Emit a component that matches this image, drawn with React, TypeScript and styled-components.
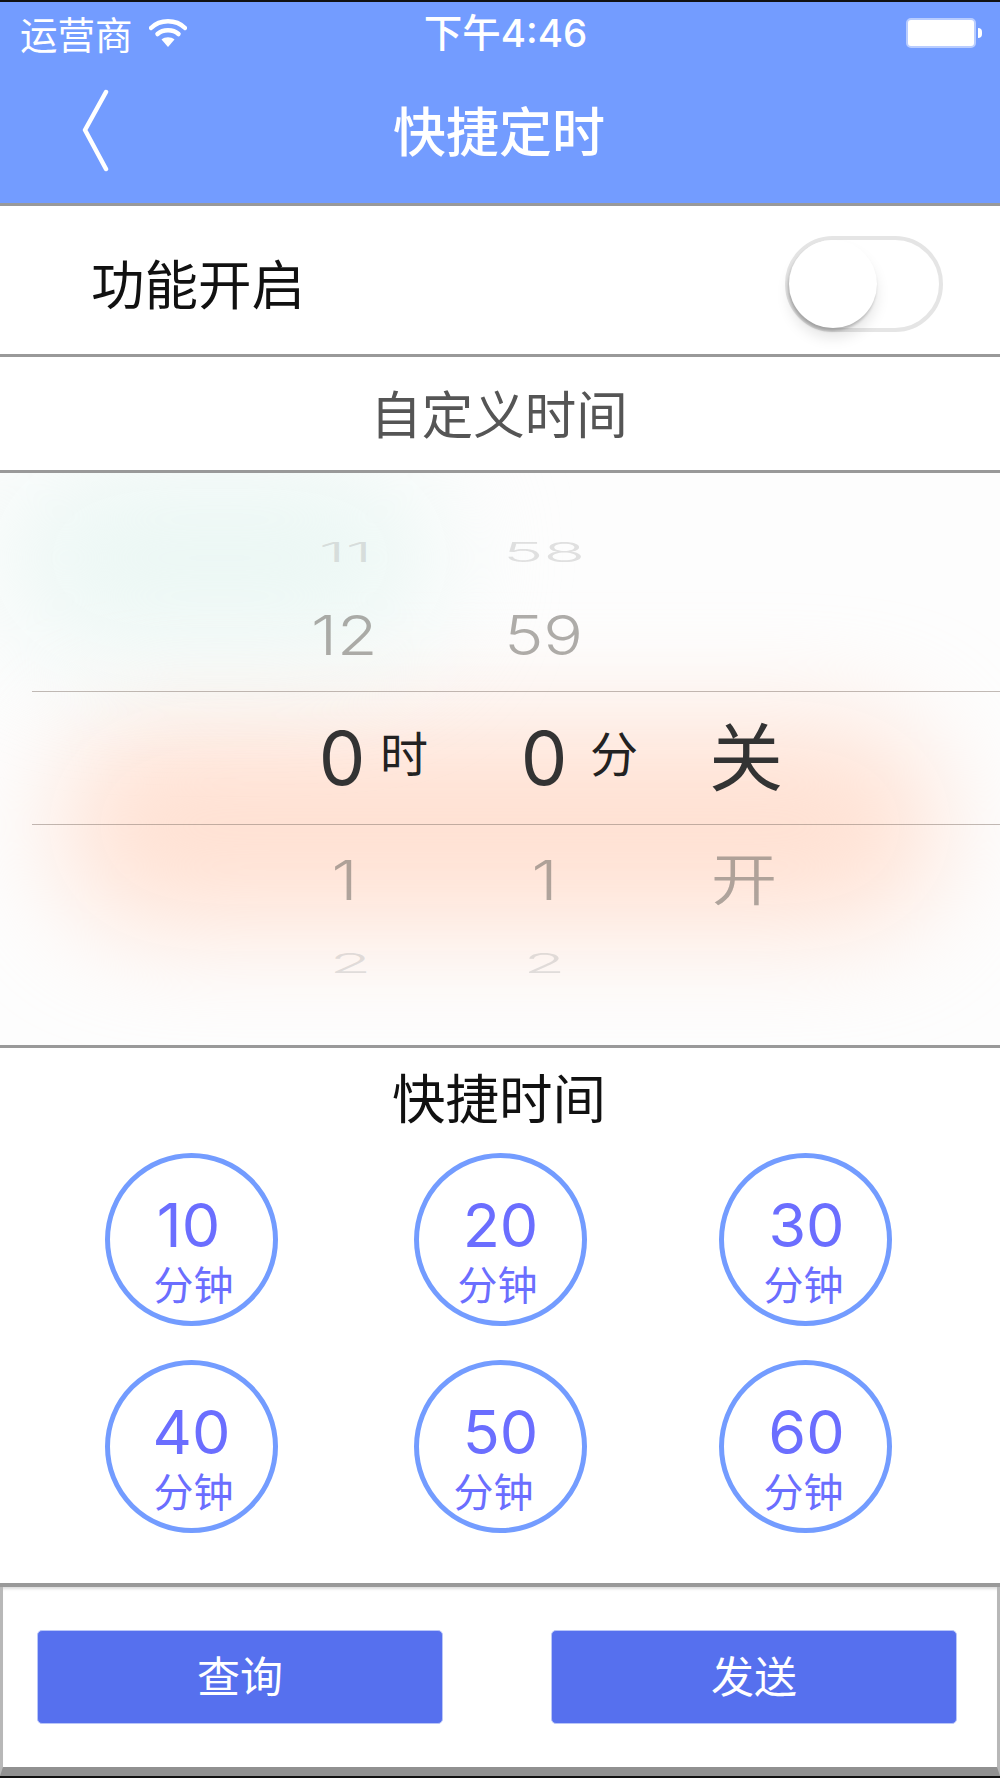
import React from 'react';
import styled, { createGlobalStyle } from 'styled-components';

const cjk = `"Noto Sans CJK SC", sans-serif`;
const latin = `Inter, "Noto Sans CJK SC", sans-serif`;

const GlobalStyle = createGlobalStyle`
  html, body {
    margin: 0;
    padding: 0;
    background: #fff;
    overflow: hidden;
  }
  * { box-sizing: border-box; }
`;

const Page = styled.div`
  width: 1000px;
  height: 1778px;
  display: flex;
  flex-direction: column;
  background: #fff;
  font-family: ${cjk};
  border-top: 2px solid #111;
  border-bottom: 2px solid #111;
`;

const Header = styled.header`
  height: 204px;
  flex: none;
  background: #739cff;
  border-bottom: 3px solid #999;
  color: #fff;
  display: flex;
  flex-direction: column;
`;

const StatusBar = styled.div`
  height: 62px;
  display: grid;
  grid-template-columns: 1fr auto 1fr;
  align-items: center;
  padding: 0 18px 0 20px;
`;

const Carrier = styled.div`
  display: flex;
  align-items: center;
  gap: 16px;
  font-size: 37.5px;
  line-height: 1;
`;

const Clock = styled.div`
  font-family: ${latin};
  font-size: 38.5px;
  font-weight: 500;
  line-height: 1;
  margin-left: 9px;
`;

const Battery = styled.div`
  justify-self: end;
  display: flex;
  align-items: center;
  gap: 2px;
`;

const BatteryBody = styled.div`
  width: 70px;
  height: 30px;
  background: #fff;
  border: 2px solid #b9cdff;
  border-radius: 5px;
`;

const BatteryNub = styled.div`
  width: 4px;
  height: 10px;
  background: #fff;
  border-radius: 0 4px 4px 0;
`;

const NavBar = styled.div`
  flex: 1;
  position: relative;
  display: flex;
  align-items: center;
  justify-content: center;
  padding: 0 0 8px;
`;

const BackIcon = styled.svg`
  position: absolute;
  left: 80px;
  top: 25px;
`;

const NavTitle = styled.h1`
  margin: 0 0 0 -2px;
  font-size: 53px;
  font-weight: 500;
  line-height: 1;
`;

const SwitchRow = styled.div`
  height: 151px;
  flex: none;
  display: flex;
  align-items: center;
  justify-content: space-between;
  padding: 0 57px 0 91px;
  border-bottom: 3px solid #999;
  font-size: 53.5px;
  color: #111;
`;

const SwitchLabel = styled.span`
  margin-top: 2px;
`;

const Toggle = styled.div`
  width: 158px;
  height: 96px;
  border: 4px solid #e5e5e5;
  border-radius: 48px;
  background: #fff;
  position: relative;
  margin-top: 8px;
`;

const Knob = styled.div`
  position: absolute;
  left: 0;
  top: 0;
  width: 88px;
  height: 88px;
  border-radius: 50%;
  background: #fff;
  box-shadow: -1px 3px 3px rgba(0, 0, 0, 0.22), 0 10px 14px rgba(0, 0, 0, 0.1);
`;

const CustomRow = styled.div`
  height: 116px;
  flex: none;
  display: flex;
  align-items: center;
  justify-content: center;
  padding: 0 2px 4px 0;
  border-bottom: 3px solid #999;
  font-size: 51.5px;
  color: #555;
`;

const Picker = styled.div`
  height: 575px;
  flex: none;
  position: relative;
  overflow: hidden;
  border-bottom: 3px solid #999;
  padding: 52px 0 0 241px;
  display: grid;
  grid-template-columns: 202px 202px 202px;
  align-items: start;
  background: #fdfdfd;

  /* blurred tints showing through the wheel */
  &::before {
    content: '';
    position: absolute;
    left: 60px;
    right: 60px;
    top: 250px;
    height: 205px;
    border-radius: 100px;
    background: #ffe1d3;
    filter: blur(55px);
  }

  &::after {
    content: '';
    position: absolute;
    left: 0;
    top: -10px;
    width: 440px;
    height: 190px;
    border-radius: 95px;
    background: #ebf7f4;
    filter: blur(60px);
  }
`;

const PickerLine = styled.div<{ $top: number }>`
  position: absolute;
  z-index: 1;
  left: 32px;
  right: 0;
  top: ${({ $top }) => $top}px;
  height: 1px;
  background: rgba(120, 105, 95, 0.45);
`;

const Wheel = styled.div`
  position: relative;
  z-index: 1;
  display: flex;
  flex-direction: column;
  align-items: center;
`;

type Tier = 'far' | 'near' | 'current';

const tierHeight: Record<Tier, number> = { far: 54, near: 112, current: 133 };
const tierSize: Record<Tier, number> = { far: 60, near: 58, current: 74 };
const tierColor: Record<Tier, string> = {
  far: 'rgba(170, 170, 170, 0.35)',
  near: 'rgba(110, 105, 100, 0.55)',
  current: '#333',
};
const tierScale: Record<Tier, string> = {
  far: 'scale(1.14, 0.45)',
  near: 'scale(1.14, 0.95)',
  current: 'none',
};

const WheelItem = styled.div<{ $tier: Tier }>`
  height: ${({ $tier }) => tierHeight[$tier]}px;
  width: 100%;
  position: relative;
  display: flex;
  align-items: center;
  justify-content: center;
`;

const ItemText = styled.span<{ $tier: Tier; $shift?: number; $drop?: number }>`
  font-family: ${latin};
  font-weight: ${({ $tier }) => ($tier === 'current' ? 400 : 350)};
  font-size: ${({ $tier }) => tierSize[$tier]}px;
  line-height: 1;
  color: ${({ $tier }) => tierColor[$tier]};
  transform: translate(${({ $shift }) => $shift ?? 0}px, ${({ $drop }) => $drop ?? 0}px) ${({ $tier }) => tierScale[$tier]};
`;

const UnitLabel = styled.span<{ $left: number }>`
  position: absolute;
  left: calc(50% + ${({ $left }) => $left}px);
  top: 36px;
  font-size: 48px;
  line-height: 1;
  color: #222;
`;

const QuickSection = styled.section`
  flex: 1;
  display: flex;
  flex-direction: column;
  align-items: center;
  border-bottom: 4px solid #999;
`;

const QuickTitle = styled.h2`
  margin: 21px 0 30px -2px;
  font-size: 53.5px;
  line-height: 54px;
  font-weight: 400;
  color: #111;
`;

const QuickGrid = styled.div`
  display: grid;
  grid-template-columns: repeat(3, 173px);
  column-gap: 134px;
  row-gap: 34px;
  margin-left: -3px;
`;

const QuickButton = styled.button`
  width: 173px;
  height: 173px;
  padding: 0;
  border: 5px solid #739cff;
  border-radius: 50%;
  background: #fff;
  display: flex;
  flex-direction: column;
  align-items: center;
  color: #6b6eff;
  font-family: ${cjk};

  &:nth-child(3n + 2) {
    margin-left: 2px;
  }
`;

const QuickValue = styled.span<{ $shift: number }>`
  font-family: ${latin};
  font-size: 61px;
  line-height: 60px;
  margin-top: 37px;
  transform: translateX(${({ $shift }) => $shift}px);
`;

const QuickUnit = styled.span<{ $shift: number }>`
  font-size: 40px;
  line-height: 40px;
  margin-top: 8px;
  transform: translateX(${({ $shift }) => $shift}px);
`;

const ActionBar = styled.div`
  height: 189px;
  flex: none;
  display: flex;
  justify-content: space-between;
  align-items: center;
  padding: 0 40px 0 34px;
  border-left: 3px solid #b8b8b8;
  border-right: 3px solid #b8b8b8;
  border-bottom: 9px solid #919191;
  box-shadow: inset 0 4px 3px -2px #ddd;
`;

const ActionButton = styled.button`
  width: 406px;
  height: 94px;
  border: 1px solid #b9c6f8;
  border-radius: 5px;
  background: #5670ee;
  color: #fff;
  font-family: ${cjk};
  font-size: 43px;
  padding-bottom: 8px;
`;

const quickTimes = [
  { value: 10, valueShift: -3, unitShift: 2 },
  { value: 20, valueShift: 0, unitShift: -3 },
  { value: 30, valueShift: 1, unitShift: -2 },
  { value: 40, valueShift: 0, unitShift: 2 },
  { value: 50, valueShift: 0, unitShift: -7 },
  { value: 60, valueShift: 1, unitShift: -2 },
];

const WifiIcon = () => (
  <svg width="38" height="28" viewBox="0 0 38 28" fill="none">
    <path d="M2 9 C11 0 27 0 36 9" stroke="#fff" strokeWidth="4.5" strokeLinecap="round" />
    <path d="M8.5 15 C14 10 24 10 29.5 15" stroke="#fff" strokeWidth="4.5" strokeLinecap="round" />
    <path d="M19 28 L12.5 20.5 C16 17.5 22 17.5 25.5 20.5 Z" fill="#fff" />
  </svg>
);

const App: React.FC = () => (
  <Page>
    <GlobalStyle />
    <Header>
      <StatusBar>
        <Carrier>
          运营商
          <WifiIcon />
        </Carrier>
        <Clock>下午4:46</Clock>
        <Battery>
          <BatteryBody />
          <BatteryNub />
        </Battery>
      </StatusBar>
      <NavBar>
        <BackIcon width="30" height="84" viewBox="0 0 30 84" fill="none">
          <path d="M26 3 L5 41 L26 80" stroke="#fff" strokeWidth="4.5" strokeLinecap="round" strokeLinejoin="round" />
        </BackIcon>
        <NavTitle>快捷定时</NavTitle>
      </NavBar>
    </Header>

    <SwitchRow>
      <SwitchLabel>功能开启</SwitchLabel>
      <Toggle>
        <Knob />
      </Toggle>
    </SwitchRow>

    <CustomRow>自定义时间</CustomRow>

    <Picker>
      <PickerLine $top={218} />
      <PickerLine $top={351} />
      <Wheel>
        <WheelItem $tier="far"><ItemText $tier="far" $shift={4}>11</ItemText></WheelItem>
        <WheelItem $tier="near"><ItemText $tier="near" $shift={2}>12</ItemText></WheelItem>
        <WheelItem $tier="current">
          <ItemText $tier="current" $shift={-2}>0</ItemText>
          <UnitLabel $left={38}>时</UnitLabel>
        </WheelItem>
        <WheelItem $tier="near"><ItemText $tier="near" $shift={2}>1</ItemText></WheelItem>
        <WheelItem $tier="far"><ItemText $tier="far" $shift={8}>2</ItemText></WheelItem>
      </Wheel>
      <Wheel>
        <WheelItem $tier="far"><ItemText $tier="far">58</ItemText></WheelItem>
        <WheelItem $tier="near"><ItemText $tier="near">59</ItemText></WheelItem>
        <WheelItem $tier="current">
          <ItemText $tier="current">0</ItemText>
          <UnitLabel $left={46}>分</UnitLabel>
        </WheelItem>
        <WheelItem $tier="near"><ItemText $tier="near">1</ItemText></WheelItem>
        <WheelItem $tier="far"><ItemText $tier="far">2</ItemText></WheelItem>
      </Wheel>
      <Wheel>
        <WheelItem $tier="far" />
        <WheelItem $tier="near" />
        <WheelItem $tier="current"><ItemText $tier="current" $drop={2}>关</ItemText></WheelItem>
        <WheelItem $tier="near"><ItemText $tier="near" $shift={-2}>开</ItemText></WheelItem>
      </Wheel>
    </Picker>

    <QuickSection>
      <QuickTitle>快捷时间</QuickTitle>
      <QuickGrid>
        {quickTimes.map((t) => (
          <QuickButton key={t.value}>
            <QuickValue $shift={t.valueShift}>{t.value}</QuickValue>
            <QuickUnit $shift={t.unitShift}>分钟</QuickUnit>
          </QuickButton>
        ))}
      </QuickGrid>
    </QuickSection>

    <ActionBar>
      <ActionButton>查询</ActionButton>
      <ActionButton>发送</ActionButton>
    </ActionBar>
  </Page>
);

export default App;
